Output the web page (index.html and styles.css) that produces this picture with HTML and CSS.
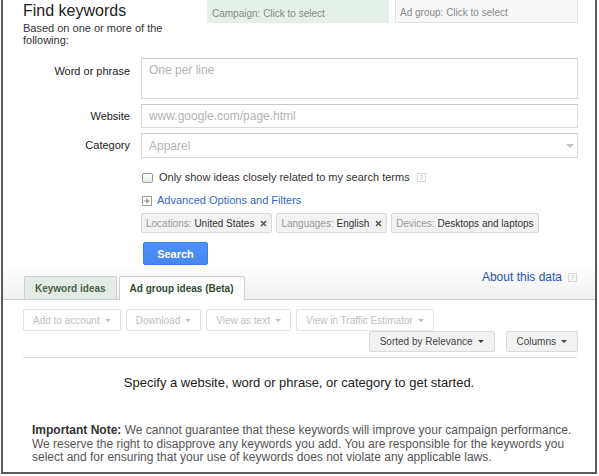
FILE: index.html
```html
<!DOCTYPE html>
<html lang="en">
<head>
<meta charset="utf-8">
<title>Find keywords</title>
<link rel="stylesheet" href="styles.css">
</head>
<body>
<div class="frame">
  <div class="top">
    <div class="intro">
      <h1>Find keywords</h1>
      <p>Based on one or more of the following:</p>
    </div>
    <div class="selectors">
      <div class="sel sel-campaign">Campaign: Click to select</div>
      <div class="sel sel-adgroup">Ad group: Click to select</div>
    </div>
  </div>

  <div class="form">
    <label class="lbl lbl-top">Word or phrase</label>
    <div class="field field-area"><span>One per line</span></div>
    <label class="lbl">Website</label>
    <div class="field field-site"><span>www.google.com/page.html</span></div>
    <label class="lbl">Category</label>
    <div class="field field-cat"><span>Apparel</span><span class="dd"></span></div>
    <div class="opts">
      <div class="check-row"><span class="cb"></span>Only show ideas closely related to my search terms<span class="help">?</span></div>
      <div class="adv-row">
        <span class="plus"><svg width="6" height="6" viewBox="0 0 6 6"><path d="M3 0.5V5.5M0.5 3H5.5" stroke="#777" stroke-width="1"/></svg></span>
        <a href="#">Advanced Options and Filters</a>
      </div>
      <div class="chips">
        <div class="chip"><span class="k">Locations:&nbsp;</span>United States<svg class="x" width="7" height="7" viewBox="0 0 7 7"><path d="M1 1L6 6M6 1L1 6" stroke="#555" stroke-width="1.6"/></svg></div>
        <div class="chip"><span class="k">Languages:&nbsp;</span>English<svg class="x" width="7" height="7" viewBox="0 0 7 7"><path d="M1 1L6 6M6 1L1 6" stroke="#555" stroke-width="1.6"/></svg></div>
        <div class="chip"><span class="k">Devices:&nbsp;</span>Desktops and laptops</div>
      </div>
      <button class="search" type="button">Search</button>
    </div>
  </div>

  <div class="tabbar">
    <div class="tabs">
      <div class="tab">Keyword ideas</div>
      <div class="tab active">Ad group ideas (Beta)</div>
    </div>
    <div class="about"><a href="#">About this data</a><span class="help">?</span></div>
  </div>

  <div class="toolbar">
    <div class="btn">Add to account<span class="caret"></span></div>
    <div class="btn">Download<span class="caret"></span></div>
    <div class="btn">View as text<span class="caret"></span></div>
    <div class="btn">View in Traffic Estimator<span class="caret"></span></div>
  </div>
  <div class="toolbar2">
    <div class="btn btn2">Sorted by Relevance<span class="caret"></span></div>
    <div class="btn btn2">Columns<span class="caret"></span></div>
  </div>
  <div class="rule"></div>

  <p class="empty">Specify a website, word or phrase, or category to get started.</p>

  <p class="note"><b>Important Note:</b> We cannot guarantee that these keywords will improve your campaign performance.<br>We reserve the right to disapprove any keywords you add. You are responsible for the keywords you<br>select and for ensuring that your use of keywords does not violate any applicable laws.</p>
</div>
</body>
</html>
```

FILE: styles.css
```css
body {
  margin: 0;
  background: #fff;
  color: #222;
  font-family: "Liberation Sans", Arial, Helvetica, sans-serif;
}

.frame {
  width: 592px;
  height: 472px;
  margin-left: 1px;
  border: 2px solid #5a5a5a;
  border-top: 0;
  overflow: hidden;
}

/* top */
.top {
  display: flex;
}
.intro {
  width: 184px;
  padding-left: 20px;
}
h1 {
  margin: 0;
  padding-top: 2px;
  font-size: 16px;
  line-height: 18px;
  font-weight: normal;
  color: #222;
}
.intro p {
  max-width: 165px;
  margin: 2px 0 0;
  font-size: 11px;
  line-height: 12px;
  color: #333;
}
.selectors {
  display: flex;
  gap: 6px;
}
.sel {
  height: 23px;
  box-sizing: border-box;
  padding: 8px 4px 0;
  font-size: 10px;
  line-height: 12px;
  color: #888;
  white-space: nowrap;
}
.sel-campaign {
  width: 182px;
  padding-left: 5px;
  background: #e4f0e8;
}
.sel-adgroup {
  width: 183px;
  padding-top: 7px;
  background: #f8f8f8;
  border: 1px solid #e2e2e2;
  border-top: 0;
}

/* form */
.form {
  display: grid;
  grid-template-columns: 107px 437px;
  column-gap: 11px;
  row-gap: 5px;
  margin: 12px 0 0 20px;
}
.lbl {
  align-self: center;
  text-align: right;
  font-size: 11px;
  line-height: 13px;
  color: #222;
}
.lbl-top {
  align-self: start;
  padding-top: 7px;
}
.field {
  box-sizing: border-box;
  display: flex;
  align-items: center;
  padding: 0 7px;
  border: 1px solid #dadada;
  border-top-color: #c9c9c9;
  background: #fff;
  font-size: 12px;
  color: #b3b3b3;
}
.field-area {
  height: 41px;
  align-items: flex-start;
  padding-top: 4px;
  line-height: 14px;
}
.field-site {
  height: 24px;
}
.field-cat {
  height: 25px;
  justify-content: space-between;
  padding-right: 3px;
}
.dd {
  width: 0;
  height: 0;
  border-left: 4px solid transparent;
  border-right: 4px solid transparent;
  border-top: 4px solid #c2c2c2;
}
.opts {
  grid-column: 2;
}
.check-row {
  display: flex;
  align-items: center;
  margin-top: 7px;
  padding-left: 1px;
  font-size: 11px;
  line-height: 15px;
  color: #333;
}
.cb {
  box-sizing: border-box;
  width: 11px;
  height: 10px;
  margin-right: 6px;
  border: 1px solid #9a9a9a;
  border-radius: 2px;
  background: linear-gradient(#fff, #e9e9e9);
}
.help {
  display: inline-block;
  box-sizing: border-box;
  width: 9px;
  height: 9px;
  margin-left: 7px;
  border: 1px solid #dadada;
  font-size: 7px;
  line-height: 7px;
  text-align: center;
  color: #b0b0b0;
}
.adv-row {
  display: flex;
  align-items: center;
  margin-top: 8px;
  padding-left: 1px;
  font-size: 11px;
  line-height: 15px;
}
.plus {
  display: flex;
  align-items: center;
  justify-content: center;
  width: 8px;
  height: 8px;
  margin-right: 5px;
  border: 1px solid #a0a0a0;
}
.adv-row a {
  color: #3366cc;
  text-decoration: none;
}
.chips {
  display: flex;
  gap: 4px;
  margin-top: 5px;
}
.chip {
  box-sizing: border-box;
  display: flex;
  align-items: center;
  height: 20px;
  padding: 0 4px;
  border: 1px solid #dadada;
  border-radius: 2px;
  background: #f2f2f2;
  font-size: 10px;
  color: #333;
  white-space: nowrap;
}
.chip .k {
  color: #999;
}
.chip .x {
  margin-left: 6px;
}
.search {
  display: block;
  width: 65px;
  height: 23px;
  margin: 9px 0 0 2px;
  padding: 0;
  border: 1px solid #3b7fe8;
  border-radius: 2px;
  background: linear-gradient(#4d90fe, #4787ed);
  color: #fff;
  font-family: inherit;
  font-size: 11px;
  font-weight: bold;
}

/* tabs */
.tabbar {
  display: flex;
  justify-content: space-between;
  height: 34px;
  padding: 0 18px 0 21px;
  border-bottom: 1px solid #cfcfcf;
  background: linear-gradient(#fff, #f0f0f0);
}
.tabs {
  display: flex;
  align-items: flex-end;
  gap: 2px;
}
.tab {
  box-sizing: border-box;
  display: flex;
  align-items: center;
  height: 23px;
  padding: 0 10px;
  border: 1px solid #cfcfcf;
  border-bottom: 0;
  border-radius: 2px 2px 0 0;
  background: #e3ebe4;
  font-size: 10px;
  font-weight: bold;
  color: #4a604b;
  white-space: nowrap;
}
.tab.active {
  height: 24px;
  margin-bottom: -1px;
  background: #fff;
  color: #304a32;
}
.about {
  display: flex;
  align-items: center;
  height: 14px;
  margin-top: 5px;
  font-size: 12px;
}
.about a {
  color: #2952a3;
  text-decoration: none;
}
.about .help {
  margin-left: 6px;
}

/* toolbars */
.toolbar {
  display: flex;
  gap: 5px;
  margin: 9px 0 0 20px;
}
.btn {
  box-sizing: border-box;
  display: flex;
  align-items: center;
  height: 22px;
  padding: 0 9px;
  border: 1px solid #e2e2e2;
  border-radius: 2px;
  background: #fff;
  font-size: 10px;
  color: #c0c0c0;
  white-space: nowrap;
}
.caret {
  width: 0;
  height: 0;
  margin-left: 5px;
  border-left: 3px solid transparent;
  border-right: 3px solid transparent;
  border-top: 3px solid currentColor;
}
.toolbar2 {
  display: flex;
  justify-content: flex-end;
  gap: 11px;
  padding-right: 17px;
}
.btn2 {
  height: 21px;
  padding: 0 10px;
  border-color: #d9d9d9;
  background: #f2f2f2;
  color: #444;
}
.rule {
  height: 1px;
  margin: 5px 18px 0 20px;
  background: #dedede;
}

.empty {
  margin: 17px 0 0;
  text-align: center;
  font-size: 13px;
  line-height: 16px;
  color: #222;
}
.note {
  margin: 33px 0 0;
  padding-left: 29px;
  font-size: 12px;
  line-height: 13.5px;
  color: #555;
  white-space: nowrap;
}
.note b {
  color: #333;
}
```
